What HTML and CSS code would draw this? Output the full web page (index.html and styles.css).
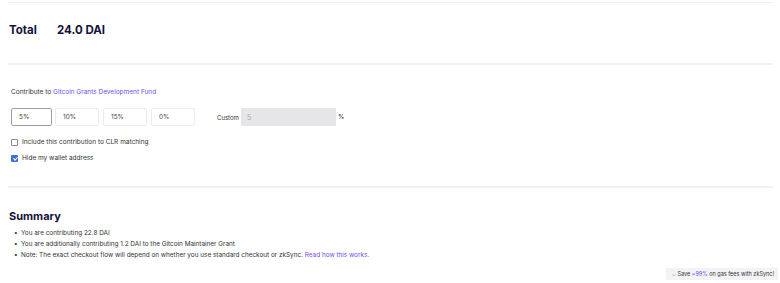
FILE: index.html
```html
<!DOCTYPE html>
<html lang="en">
<head>
    <meta charset="UTF-8">
    <meta name="viewport" content="width=device-width, initial-scale=1.0">
    <title>Checkout</title>
    <link rel="stylesheet" href="styles.css">
</head>
<body>
    <div class="page">
        <div class="total-row">
            <span class="total-label">Total</span>
            <span class="total-value">24.0 DAI</span>
        </div>

        <div class="contribute">
            <p class="contribute-title">Contribute to <a href="#">Gitcoin Grants Development Fund</a></p>
            <div class="options">
                <button class="option active">5%</button>
                <button class="option">10%</button>
                <button class="option">15%</button>
                <button class="option">0%</button>
                <span class="custom-label">Custom</span>
                <input class="custom-input" type="text" placeholder="5" disabled>
                <span class="percent">%</span>
            </div>
            <label class="check"><span class="box"></span>Include this contribution to CLR matching</label>
            <label class="check"><span class="box checked"></span>Hide my wallet address</label>
        </div>

        <div class="summary">
            <h2>Summary</h2>
            <ul>
                <li>You are contributing 22.8 DAI</li>
                <li>You are additionally contributing 1.2 DAI to the Gitcoin Maintainer Grant</li>
                <li>Note: The exact checkout flow will depend on whether you use standard checkout or zkSync. <a href="#">Read how this works.</a></li>
            </ul>
        </div>
    </div>

    <div class="toast"><span class="caret">⌄</span> Save <span class="hl">~99%</span> on gas fees with zkSync!</div>
</body>
</html>
```

FILE: styles.css
```css
body {
    margin: 0;
    background: #ffffff;
    font-family: 'Inter', 'Noto Sans', sans-serif;
    color: #1d1b3f;
}

a {
    color: #6f4ff2;
    text-decoration: none;
}

.page {
    margin: 2px 7px 0 8px;
    border-top: 1px solid #f2f2f4;
}

.total-row {
    display: flex;
    align-items: center;
    height: 54px;
    padding: 0 0 6px 1px;
    border-bottom: 2px solid #f1f1f3;
    font-size: 11.5px;
    font-weight: 700;
    color: #141238;
}

.total-label {
    width: 48px;
}

.contribute {
    padding: 22px 0 24px 3px;
    border-bottom: 2px solid #f1f1f3;
    font-size: 6.5px;
    color: #333;
}

.contribute-title {
    margin: 0 0 11px;
    line-height: 10px;
}

.options {
    display: flex;
    align-items: center;
    height: 18px;
    margin-bottom: 12px;
}

.option {
    width: 44px;
    height: 18px;
    margin-right: 4px;
    padding: 0 0 0 7px;
    text-align: left;
    background: #fff;
    border: 1px solid #ececef;
    border-radius: 2px;
    font: inherit;
    color: #444;
}

.option.active {
    width: 41px;
    margin-right: 3px;
    border-color: #9d9db0;
}

.custom-label {
    margin-left: 18px;
    width: 24px;
    font-size: 6px;
}

.custom-input {
    width: 95px;
    height: 18px;
    box-sizing: border-box;
    padding: 0 6px;
    border: none;
    background: #e6e6e8;
    font: inherit;
    font-size: 7px;
}

.custom-input::placeholder {
    color: #a8a8b0;
}

.percent {
    margin-left: 2px;
}

.check {
    display: flex;
    align-items: center;
    height: 8px;
    margin-bottom: 8px;
}

.check:last-child {
    margin-bottom: 0;
}

.box {
    width: 5px;
    height: 5px;
    margin-right: 4px;
    border: 1px solid #8a8a95;
    border-radius: 1px;
}

.box.checked {
    background: #3b6fd6;
    border-color: #3b6fd6;
    position: relative;
}

.box.checked::after {
    content: "";
    position: absolute;
    left: 1.5px;
    top: 0;
    width: 1.5px;
    height: 3px;
    border: solid #fff;
    border-width: 0 1px 1px 0;
    transform: rotate(45deg);
}

.summary {
    padding: 21px 0 0 1px;
}

.summary h2 {
    margin: 0 0 5px;
    font-size: 11px;
    font-weight: 700;
    line-height: 14px;
    color: #141238;
}

.summary ul {
    margin: 0;
    padding-left: 5px;
    list-style: none;
    font-size: 6.4px;
    line-height: 11px;
    color: #333;
}

.summary li::before {
    content: "•";
    display: inline-block;
    width: 7px;
}

.toast {
    position: fixed;
    right: 2px;
    bottom: 3px;
    padding: 3px 4px 3px 6px;
    background: #f3f3f6;
    font-size: 5.5px;
    color: #333;
}

.caret {
    color: #999;
}

.hl {
    color: #6f4ff2;
}
```
